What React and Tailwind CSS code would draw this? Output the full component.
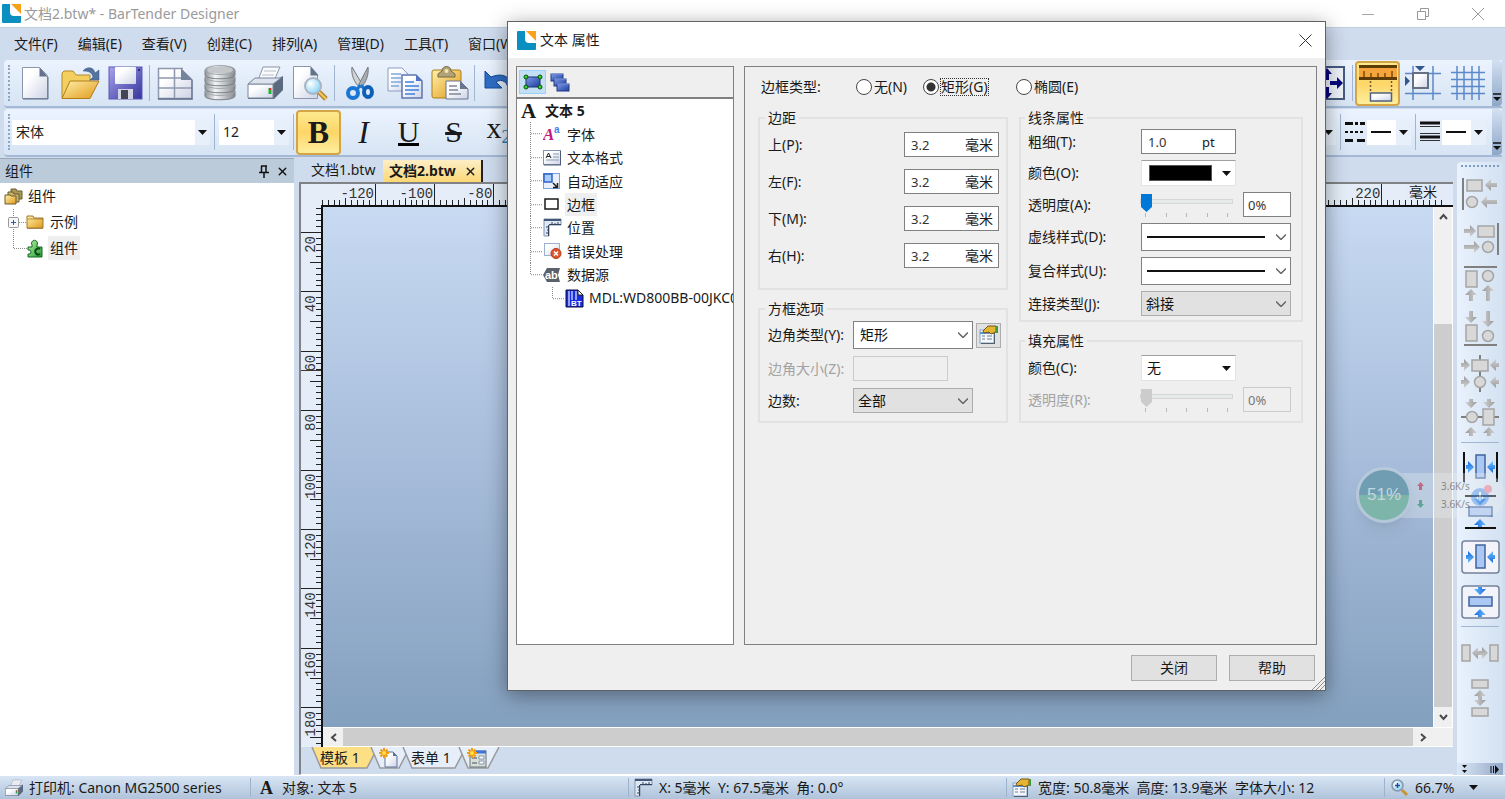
import clsx from "clsx"
import { X } from "lucide-react"

const MENUS = ["文件(F)", "编辑(E)", "查看(V)", "创建(C)", "排列(A)", "管理(D)", "工具(T)", "窗口(W)"]

const Defs = () => (
  <svg className="absolute h-0 w-0" aria-hidden="true">
    <defs>
      <linearGradient id="paper" x1="0" y1="0" x2="1" y2="1">
        <stop offset="0.3" stopColor="#ffffff" />
        <stop offset="1" stopColor="#cdd3e6" />
      </linearGradient>
      <linearGradient id="gold" x1="0" y1="0" x2="1" y2="1">
        <stop offset="0" stopColor="#fff0a8" />
        <stop offset="1" stopColor="#e09a1c" />
      </linearGradient>
      <linearGradient id="violet" x1="0" y1="0" x2="1" y2="1">
        <stop offset="0" stopColor="#a9a4ec" />
        <stop offset="1" stopColor="#34349c" />
      </linearGradient>
      <linearGradient id="metal" x1="0" y1="0" x2="1" y2="0">
        <stop offset="0" stopColor="#8e9297" />
        <stop offset="0.35" stopColor="#f4f5f6" />
        <stop offset="1" stopColor="#84898f" />
      </linearGradient>
      <linearGradient id="navy" x1="0" y1="0" x2="1" y2="1">
        <stop offset="0" stopColor="#7e9bea" />
        <stop offset="1" stopColor="#1b3d9b" />
      </linearGradient>
      <linearGradient id="greyArrow" x1="0" y1="0" x2="0" y2="1">
        <stop offset="0" stopColor="#d2d2d2" />
        <stop offset="1" stopColor="#9a9a9a" />
      </linearGradient>
      <linearGradient id="blueArrow" x1="0" y1="0" x2="0" y2="1">
        <stop offset="0" stopColor="#6fc0ff" />
        <stop offset="1" stopColor="#1468dc" />
      </linearGradient>
      <linearGradient id="puzzle" x1="0" y1="0" x2="1" y2="1">
        <stop offset="0" stopColor="#b5f2a4" />
        <stop offset="1" stopColor="#239b31" />
      </linearGradient>
      <radialGradient id="lens" cx="0.35" cy="0.35" r="0.7">
        <stop offset="0" stopColor="#ffffff" />
        <stop offset="1" stopColor="#86d3f5" />
      </radialGradient>
    </defs>
  </svg>
)

const Svg = ({ w = 36, h = w, box = `0 0 ${w} ${h}`, className, children }) => (
  <svg width={w} height={h} viewBox={box} fill="none" aria-hidden="true" className={clsx("shrink-0", className)}>
    {children}
  </svg>
)

/* ---------- icons ---------- */

const AppLogo = () => (
  <Svg w={19}>
    <rect width="19" height="19" rx="1" fill="#0b8fc0" />
    <path d="M8 0h11v12h-7a4 4 0 0 1-4-4z" fill="#fff" />
    <path d="M9 0h10v10z" fill="#f9a11b" />
  </Svg>
)

const NewIcon = () => (
  <Svg>
    <path d="M5.500 2.500h17l8 8v23h-25z" fill="url(#paper)" stroke="#8b95ab" />
    <path d="M22.500 2.500l8 9h-8z" fill="#62728c" />
    <path d="M6 34h25M31 12v22" stroke="#5d6c86" />
  </Svg>
)

const OpenIcon = () => (
  <Svg w={40} h={36}>
    <path d="M2 33V8l2-2h9l3 4h14v8" fill="#f3cf60" stroke="#b4882b" />
    <path d="M2 33.500L10 16h29l-9 17.500z" fill="url(#gold)" stroke="#b27c19" />
    <path d="M23 6c4-5 11-4 12 2l4-3v10h-9l3-3c-1-5-5-6-10-6z" fill="#54739e" stroke="#36547f" strokeWidth="0.500" />
  </Svg>
)

const SaveIcon = () => (
  <Svg>
    <rect x="2" y="2" width="33" height="32" fill="url(#violet)" stroke="#5a58b6" />
    <rect x="8" y="2" width="21" height="17" rx="1" fill="url(#paper)" />
    <path d="M11 34V24h15v10" fill="#d3d4e3" />
    <rect x="14" y="25" width="7" height="9" fill="#434557" />
    <rect x="31" y="4" width="2" height="2" fill="#29296e" />
  </Svg>
)

const TableIcon = () => (
  <Svg>
    <path d="M1 3h25l9 9v21H1z" fill="url(#paper)" />
    <path d="M1.500 3v30.500h34M1 3.500h25M1 13h28M1 23h34M17.500 3v30" stroke="#8f99ae" strokeWidth="1.500" />
    <path d="M24 3l12 12H24z" fill="#74849d" />
    <path d="M35 15v19H1" stroke="#61708a" strokeWidth="1.500" />
  </Svg>
)

const DatabaseIcon = () => (
  <Svg>
    {[24, 17, 10, 3].map((y) => (
      <g key={y}>
        <path d={`M3 ${y + 2}v5c0 5 30 5 30 0v-5z`} fill="url(#metal)" stroke="#7b8086" />
        <ellipse cx="18" cy={y + 2} rx="15" ry="4.500" fill="url(#metal)" stroke="#a2a7ac" />
      </g>
    ))}
    <ellipse cx="18" cy="5" rx="13" ry="3.500" fill="#c4c7ca" />
  </Svg>
)

const PrinterIcon = ({ size = 36 }) => (
  <Svg w={size} box="0 0 36 36">
    <path d="M16 2h17l-7 16H10z" fill="#f9fafc" stroke="#8b96a8" />
    <path d="M17 6h12M15 10h12M14 14h11" stroke="#b3bdcd" />
    <path d="M1 19l7-6h24l4-2v14l-9 9H1z" fill="#5c6a7f" />
    <path d="M1 19h25v14H1z" fill="url(#paper)" stroke="#7c889c" />
    <path d="M1 19l7-6h26l-8 6z" fill="#dce2ee" stroke="#7c889c" />
    <path d="M23 23v6" stroke="#1fb52c" strokeWidth="3" />
    <path d="M23 23v2" stroke="#d33" strokeWidth="2" />
  </Svg>
)

const PreviewIcon = () => (
  <Svg>
    <path d="M1.500 1.500h17l7 8v24h-24z" fill="url(#paper)" stroke="#8b95ab" />
    <path d="M18.500 1.500l8 9h-8z" fill="#62728c" />
    <path d="M27 27l7 7" stroke="#b5862a" strokeWidth="5" />
    <path d="M27 27l7 7" stroke="#efc96a" strokeWidth="2" />
    <circle cx="21" cy="21" r="8" fill="url(#lens)" stroke="#a8b4c2" strokeWidth="2" />
  </Svg>
)

const CutIcon = () => (
  <Svg>
    <path d="M10 2l10 17-2 4C12 17 9 10 10 2z" fill="#d0d2d5" stroke="#75797f" />
    <path d="M26 2l-9 17 2 4c5-6 8-13 7-21z" fill="#a9acb0" stroke="#75797f" />
    <path d="M18 20l-3 5M19 20l4 5" stroke="#1976d4" strokeWidth="3" />
    <ellipse cx="11" cy="28" rx="5" ry="5" stroke="#1976d4" strokeWidth="4" />
    <ellipse cx="26" cy="27" rx="4" ry="5" stroke="#0f5fb8" strokeWidth="4" />
  </Svg>
)

const CopyIcon = () => (
  <Svg>
    <path d="M1 3h14l6 6v17H1z" fill="url(#paper)" stroke="#8d9cc0" />
    <path d="M4 9h10M4 13h10M4 17h10M4 21h8" stroke="#7fa8dd" strokeWidth="1.500" />
    <path d="M15 10h14l6 6v17H15z" fill="url(#paper)" stroke="#5d74b0" strokeWidth="1.500" />
    <path d="M29 10v6h6z" fill="#4f74c4" />
    <path d="M18 17h9M18 21h14M18 25h14M18 29h10" stroke="#3f7fe0" strokeWidth="1.500" />
  </Svg>
)

const PasteIcon = () => (
  <Svg w={38} h={36}>
    <rect x="1" y="5" width="29" height="28" rx="2" fill="url(#gold)" stroke="#aa7c1b" />
    <path d="M7 12V9l4-3c0-6 9-6 9 0l4 3v3z" fill="#b1a376" stroke="#756a47" />
    <circle cx="15.500" cy="6" r="2" fill="#f5e6b5" />
    <path d="M15 16h14l8 8v10H15z" fill="url(#paper)" stroke="#69758b" />
    <path d="M29 16v8h8z" fill="#69758b" />
    <path d="M18 21h8M18 25h9M18 29h12" stroke="#7f8694" strokeWidth="1.500" />
  </Svg>
)

const UndoIcon = () => (
  <Svg>
    <path d="M3 6v17h17l-6-6c6-4 13 0 12 10 6-12-2-21-17-15z" fill="#2f6cc4" stroke="#174a98" />
  </Svg>
)

const FitIcon = () => (
  <Svg>
    <rect x="1" y="2" width="33" height="32" fill="#eef3fb" stroke="#465a82" strokeWidth="2" />
    <path d="M17 3l5 6h-3v6h-4V9h-3zM17 34l5-6h-3v-6h-4v6h-3zM33 18l-6-6v4h-7v4h7v4zM2 18l6-6v4h6v4H8v4z" fill="#08087e" />
  </Svg>
)

const RulerButtonIcon = () => (
  <Svg w={40} h={38}>
    <rect x="1" y="2" width="38" height="13" fill="#f6a53c" />
    <path d="M1 2.500h38M1 14.500h38" stroke="#5c3b06" strokeWidth="3" />
    <path d="M6 7v6M13 9v4M20 9v4M27 9v4M34 7v6" stroke="#7a4d08" strokeWidth="1.500" />
    <path d="M12.500 17v12M33.500 17v12" stroke="#6d5a2d" strokeDasharray="2 2" strokeWidth="1.500" />
    <rect x="12.500" y="29" width="21" height="8" fill="url(#paper)" stroke="#51617f" strokeWidth="1.500" />
  </Svg>
)

const SnapIcon = () => (
  <Svg>
    <path d="M8 1v34M28 1v34M0 8.500h36M0 28.500h36" stroke="#5b88c8" strokeWidth="1.500" />
    <rect x="8" y="8" width="15" height="15" fill="url(#paper)" stroke="#667084" strokeWidth="2" />
    <path d="M10 1h10l-5 5zM0 11v10l5-5z" fill="#34568f" />
  </Svg>
)

const GridIcon = () => (
  <Svg>
    <path d="M7 1v34M14 1v34M22 1v34M29 1v34M1 7.500h34M1 14.500h34M1 21.500h34M1 28.500h34" stroke="#5b88c8" strokeWidth="1.500" />
  </Svg>
)

const FoldersIcon = () => (
  <Svg w={19} h={18}>
    <path d="M7 2h5l1 2h5v8H7z" fill="#a8975b" stroke="#6b5d2e" />
    <path d="M4 5h5l1 2h5v8H4z" fill="#c9b36b" stroke="#6b5d2e" />
    <path d="M1 8h5l1 1h5v8H1z" fill="url(#gold)" stroke="#6b5d2e" />
  </Svg>
)

const FolderIcon = () => (
  <Svg w={18} h={16}>
    <path d="M1 14V2h6l1 2h9v10z" fill="url(#gold)" stroke="#a1772b" />
    <path d="M1 14.500h16M1.500 5H17" stroke="#8a641f" strokeOpacity="0.600" />
  </Svg>
)

const PuzzleIcon = () => (
  <Svg w={17} h={19}>
    <path d="M1 8h4V6a3 3 0 1 1 5 0v2h5v10H1v-3h1a2 2 0 0 0 0-4H1z" fill="url(#puzzle)" stroke="#146b23" />
    <path d="M13 10a3 3 0 1 0 0 5" stroke="#0c4b18" strokeWidth="2" />
  </Svg>
)

const HandIcon = () => (
  <Svg w={20}>
    <rect x="1" y="5" width="14" height="13" fill="#f4f8fc" stroke="#88a6c8" />
    <path d="M1 8h14" stroke="#5b93cf" strokeWidth="2" />
    <path d="M3 11h3M3 14h3M8 11h5M8 14h5" stroke="#9aa7b7" strokeWidth="1.500" />
    <path d="M4 6l5-5h8v6l-5 2-2-2-5 1z" fill="#e5b430" stroke="#75561a" />
    <path d="M17 1h2v7h-2z" fill="#3f9b3a" />
    <path d="M2 18.500h14M15.500 8v10" stroke="#53606f" />
  </Svg>
)

const SmallRulerIcon = () => (
  <Svg w={19}>
    <path d="M1 1h17v6H6v11H1z" fill="#dfe8f5" stroke="#8392ab" />
    <path d="M1 1h17v2H1z" fill="#435778" />
    <path d="M9 4v3M12 5v2M15 4v3M3 9h3M4 12h2M3 15h3M5.500 7v11M6 6.500h12" stroke="#32435f" />
  </Svg>
)

const ZoomInIcon = () => (
  <Svg w={19}>
    <path d="M12 12l5 5" stroke="#c99432" strokeWidth="3" />
    <circle cx="7.500" cy="7.500" r="5.500" fill="url(#lens)" stroke="#8b98aa" strokeWidth="1.500" />
    <path d="M5 7.500h5M7.500 5v5" stroke="#234c9e" strokeWidth="1.500" />
  </Svg>
)

const ShapeIcon = () => (
  <Svg w={20} h={16}>
    <rect x="3" y="3" width="14" height="10" fill="url(#navy)" stroke="#1d3270" />
    {[[3, 3], [17, 3], [3, 13], [17, 13]].map(([x, y]) => (
      <circle key={`${x}-${y}`} cx={x} cy={y} r="2" fill="#2fd62f" stroke="#124b12" />
    ))}
  </Svg>
)

const StackIcon = () => (
  <Svg w={20} h={19}>
    {[[1, 1], [4, 6], [7, 11]].map(([x, y]) => (
      <g key={x}>
        <rect x={x} y={y} width="12" height="7" fill="url(#navy)" stroke="#223b84" />
        <path d={`M${x} ${y}h12`} stroke="#8fa9ee" />
      </g>
    ))}
  </Svg>
)

const FontIcon = () => (
  <Svg w={18}>
    <text x="0" y="15" fontFamily="Liberation Serif, serif" fontWeight="bold" fontStyle="italic" fontSize="17" fill="#c2187f">A</text>
    <text x="11" y="8" fontFamily="Liberation Sans, sans-serif" fontWeight="bold" fontSize="10" fill="#4b7fe6">a</text>
  </Svg>
)

const FormatIcon = () => (
  <Svg w={18} h={16}>
    <rect x="0.500" y="0.500" width="17" height="14" fill="url(#paper)" stroke="#8494ae" />
    <path d="M1 15h17M17.500 1v14" stroke="#4c5c78" />
    <path d="M10 4h6M10 7h6M3 10h13" stroke="#8b9ab3" />
    <path d="M3 8l2.500-5L8 8M4 6.500h3" stroke="#222" />
  </Svg>
)

const AutoFitIcon = () => (
  <Svg w={17}>
    <rect x="0.500" y="0.500" width="16" height="15" fill="#e9f0fb" stroke="#7ba3e0" />
    <rect x="1" y="1" width="8" height="8" fill="#a9ccf8" stroke="#2c63cd" strokeWidth="1.500" />
    <path d="M10 10l4 4M14.500 10v4.500H10" stroke="#1c1c1c" strokeWidth="1.500" />
  </Svg>
)

const BorderIcon = () => (
  <Svg w={16} h={14}>
    <rect x="2" y="2" width="13" height="10" fill="#fff" stroke="#1a1a1a" strokeWidth="1.500" />
  </Svg>
)

const ErrorIcon = () => (
  <Svg w={19} h={18}>
    <rect x="1.500" y="1.500" width="15" height="12" fill="url(#paper)" stroke="#9fb0cf" />
    <circle cx="13" cy="11.500" r="5" fill="#e2542b" stroke="#b2391a" />
    <path d="M11 9.500l4 4M15 9.500l-4 4" stroke="#fff" strokeWidth="1.500" />
  </Svg>
)

const SourceIcon = () => (
  <Svg w={18} h={16}>
    <path d="M4 1h13l-2 7 2 7H4L0 8z" fill="#59616d" />
    <text x="2" y="12" fontFamily="Liberation Sans, sans-serif" fontWeight="bold" fontSize="11" fill="#fff">ab</text>
  </Svg>
)

const BarcodeIcon = () => (
  <Svg w={19}>
    <path d="M1 1h12l5 5v12H1z" fill="#1a2ce0" stroke="#0a0a3a" />
    <path d="M4 2v15M7 2v9M11 2v9" stroke="#b9c6ff" strokeWidth="1.500" />
    <path d="M13 1v5h5z" fill="#fff" stroke="#222" />
    <text x="6" y="17" fontFamily="Liberation Sans, sans-serif" fontWeight="bold" fontSize="8" fill="#fff">BT</text>
  </Svg>
)

const NewPageIcon = () => (
  <Svg w={20} h={20}>
    <path d="M6 4h8l4 4v11H6z" fill="url(#paper)" stroke="#5f7396" />
    <path d="M14 4v4h4z" fill="#5f7396" />
    <Spark />
  </Svg>
)

const NewFormIcon = () => (
  <Svg w={20} h={20}>
    <rect x="3" y="3" width="16" height="16" fill="#d9dfd7" stroke="#66747a" />
    <path d="M9 4h10" stroke="#3f74e0" strokeWidth="3" />
    <path d="M5 10h5M5 15h5" stroke="#738089" strokeWidth="1.500" />
    <path d="M12 8h5v3h-5zM12 13h5v3h-5z" fill="#fff" stroke="#8294b3" />
    <Spark />
  </Svg>
)

const Spark = () => (
  <g>
    <path d="M5 0v10M0 5h10M1.500 1.500l7 7M8.500 1.500l-7 7" stroke="#f39c12" strokeWidth="2" />
    <circle cx="5" cy="5" r="2" fill="#ffe14a" />
  </g>
)

/* ---------- alignment palette ---------- */

const ROTATION = { left: 0, up: 90, right: 180, down: 270 }

const Arrow = ({ x, y, len, dir, blue }) => (
  <path
    transform={`translate(${x} ${y}) rotate(${ROTATION[dir]})`}
    d={`M0 0l6-6v4h${len - 6}v4h-${len - 6}v4z`}
    fill={blue ? "url(#blueArrow)" : "url(#greyArrow)"}
  />
)

const Box = ({ x, y, w, h, blue }) => (
  <rect x={x} y={y} width={w} height={h} fill={blue ? "#abc8f5" : "#d8d8d8"} stroke={blue ? "#3f639c" : "#a5a5a5"} strokeWidth="1.500" />
)

const Dot = ({ x, y }) => <circle cx={x} cy={y} r="5.500" fill="#d8d8d8" stroke="#a5a5a5" strokeWidth="1.500" />

const Bar = ({ d, black }) => <path d={d} stroke={black ? "#111" : "#808080"} strokeWidth="2" />

const ALIGN_TOOLS = [
  <><Bar d="M3 4v32" /><Box x={7} y={6} w={15} h={11} /><Arrow x={25} y={11} len={12} dir="left" /><Dot x={12} y={28} /><Arrow x={21} y={28} len={16} dir="left" /></>,
  <><Bar d="M38 4v32" /><Box x={18} y={7} w={16} h={11} /><Arrow x={16} y={12} len={12} dir="right" /><Dot x={28} y={28} /><Arrow x={20} y={28} len={16} dir="right" /></>,
  <><Bar d="M4 3h33" /><Box x={6} y={7} w={11} h={16} /><Dot x={28} y={12} /><Arrow x={11} y={25} len={12} dir="up" /><Arrow x={28} y={21} len={16} dir="up" /></>,
  <><Bar d="M4 36h33" /><Box x={6} y={16} w={11} h={16} /><Dot x={28} y={27} /><Arrow x={11} y={14} len={12} dir="down" /><Arrow x={28} y={18} len={16} dir="down" /></>,
  <><Bar d="M20 1v37" /><Box x={12} y={6} w={16} h={11} /><Dot x={20} y={28} /><Arrow x={10} y={11} len={9} dir="right" /><Arrow x={30} y={11} len={9} dir="left" /><Arrow x={10} y={28} len={9} dir="right" /><Arrow x={30} y={28} len={9} dir="left" /></>,
  <><Bar d="M1 18h38" /><Dot x={12} y={18} /><Box x={23} y={10} w={11} h={16} /><Arrow x={11} y={9} len={9} dir="down" /><Arrow x={29} y={9} len={9} dir="down" /><Arrow x={11} y={28} len={9} dir="up" /><Arrow x={29} y={28} len={9} dir="up" /></>,
]

const wide = <><Box x={16} y={8} w={9} h={23} blue /><Arrow x={14} y={20} len={8} dir="right" blue /><Arrow x={27} y={20} len={8} dir="left" blue /></>
const tall = <><Box x={9} y={15} w={23} h={9} blue /><Arrow x={20} y={13} len={8} dir="down" blue /><Arrow x={20} y={27} len={8} dir="up" blue /></>
const frame = <rect x="2" y="4" width="37" height="32" rx="3" fill="#f2f4fa" stroke="#74819c" strokeWidth="1.500" />

const PAGE_TOOLS = [
  <><Bar d="M4 5v30M37 5v30" black />{wide}</>,
  <><Bar d="M5 4h31M5 36h31" black />{tall}</>,
  <>{frame}{wide}</>,
  <>{frame}{tall}</>,
]

const SPACE_TOOLS = [
  <><Box x={2} y={13} w={8} h={16} /><Box x={30} y={13} w={8} h={16} /><Arrow x={12} y={21} len={9} dir="left" /><Arrow x={28} y={21} len={9} dir="right" /></>,
  <><Box x={12} y={3} w={16} h={8} /><Box x={12} y={31} w={16} h={8} /><Arrow x={20} y={13} len={9} dir="up" /><Arrow x={20} y={29} len={9} dir="down" /></>,
]

const PaletteGroup = ({ tools }) =>
  tools.map((shape, i) => (
    <button key={i} className="flex h-[45px] shrink-0 items-center justify-center">
      <Svg w={40}>{shape}</Svg>
    </button>
  ))

const Palette = () => (
  <aside className="mt-1 flex w-[46px] shrink-0 flex-col rounded-t bg-linear-to-r from-[#e9f2fd] to-[#d3e1f1]">
    <div className="mx-1 mt-[3px] mb-1 border-t-2 border-dotted border-[#7d9cc4]" />
    <PaletteGroup tools={ALIGN_TOOLS} />
    <hr className="mx-1 my-px border-[#9fb7d3]" />
    <PaletteGroup tools={PAGE_TOOLS} />
    <hr className="mx-1 my-[2px] border-[#9fb7d3]" />
    <PaletteGroup tools={SPACE_TOOLS} />
    <div className="mt-auto flex h-3 items-center justify-between bg-linear-to-r from-[#dce8f6] to-[#93a9c8] px-1">
      <Svg w={7} h={9}><path d="M1 0h5L3.500 3zM1 5h5L3.500 8z" fill="#111" /></Svg>
      <Svg w={9} h={9}><path d="M1 1v7M3.500 1v7" stroke="#111" /><path d="M5 0l4 4.500L5 9z" fill="#111" /></Svg>
    </div>
  </aside>
)

/* ---------- bars ---------- */

const TitleBar = () => (
  <header className="flex h-[27px] shrink-0 items-center bg-white pl-[2px] text-[#9a9a9a]">
    <AppLogo />
    <h1 className="ml-[3px] text-sm">文档2.btw* - BarTender Designer</h1>
    <div className="ml-auto flex">
      <button aria-label="最小化" className="flex w-[55px] items-center justify-center"><Svg w={12}><path d="M0 6.500h12" stroke="#a5a5a5" /></Svg></button>
      <button aria-label="还原" className="flex w-[55px] items-center justify-center"><Svg w={12}><path d="M.5 3.500h8v8h-8zM3.500 3V.5h8v8H9" stroke="#999" /></Svg></button>
      <button aria-label="关闭" className="flex w-[55px] items-center justify-center"><Svg w={12}><path d="M0 0l12 12M12 0L0 12" stroke="#999" /></Svg></button>
    </div>
  </header>
)

const Grip = () => <div className="mx-[2px] h-9 border-l-2 border-dotted border-[#8aa6c8]" />
const Sep = () => <div className="mx-[2px] h-9 w-px shrink-0 bg-[#9fb5d0]" />

const ToolButton = ({ label, active, children }) => (
  <button
    aria-label={label}
    className={clsx(
      "flex h-[45px] w-[45px] shrink-0 items-center justify-center",
      active && "rounded-sm border-2 border-[#d3a546] bg-linear-to-b from-[#fde98d] via-[#fdd667] to-[#fdee9c]"
    )}
  >
    {children}
  </button>
)

const Overflow = () => (
  <button aria-label="更多" className="ml-[2px] flex h-full w-[10px] shrink-0 flex-col items-center justify-end rounded-r bg-linear-to-b from-[#d3e0f1] to-[#8ea7c8] pb-1">
    <Svg w={8} h={9}><path d="M0 1h8" stroke="#111" strokeWidth="1.500" /><path d="M0 4h8L4 8z" fill="#111" /></Svg>
  </button>
)

const Caret = () => (
  <Svg w={9} h={5}><path d="M0 0h9L4.500 5z" fill="#111" /></Svg>
)

const Toolbar = ({ children }) => (
  <div className="mr-[3px] mb-px ml-1 flex h-12 shrink-0 items-center rounded-l border-b-2 border-[#a3b9d5] bg-linear-to-b from-[#ebf3fe] to-[#d7e4f3] pl-[2px]">
    {children}
  </div>
)

const BarSelect = ({ label, value, className }) => (
  <div className={clsx("relative h-[25px] shrink-0", className)}>
    <select aria-label={label} className="h-full w-full appearance-none bg-white pl-1 text-sm text-[#222]">
      <option>{value}</option>
    </select>
    <div className="pointer-events-none absolute inset-y-0 right-0 flex w-[15px] items-center justify-center bg-[#e6effa]"><Caret /></div>
  </div>
)

const LineSelect = ({ label }) => (
  <div className="relative h-[25px] w-[44px]">
    <select aria-label={label} className="h-full w-full appearance-none bg-white"><option value="solid" /></select>
    <div className="pointer-events-none absolute inset-y-0 left-1 flex items-center"><div className="h-[2px] w-5 bg-[#111]" /></div>
    <div className="pointer-events-none absolute inset-y-0 right-0 flex w-[15px] items-center justify-center bg-[#e6effa]"><Caret /></div>
  </div>
)

const MainToolbar = () => (
  <Toolbar>
    <Grip />
    <ToolButton label="新建"><NewIcon /></ToolButton>
    <ToolButton label="打开"><OpenIcon /></ToolButton>
    <ToolButton label="保存"><SaveIcon /></ToolButton>
    <Sep />
    <ToolButton label="页面设置"><TableIcon /></ToolButton>
    <ToolButton label="数据库"><DatabaseIcon /></ToolButton>
    <ToolButton label="打印"><PrinterIcon /></ToolButton>
    <ToolButton label="打印预览"><PreviewIcon /></ToolButton>
    <Sep />
    <ToolButton label="剪切"><CutIcon /></ToolButton>
    <ToolButton label="复制"><CopyIcon /></ToolButton>
    <ToolButton label="粘贴"><PasteIcon /></ToolButton>
    <Sep />
    <ToolButton label="撤消"><UndoIcon /></ToolButton>
    <div className="ml-auto flex h-full items-center">
      <ToolButton label="适合窗口"><FitIcon /></ToolButton>
      <Sep />
      <ToolButton label="标尺" active><RulerButtonIcon /></ToolButton>
      <ToolButton label="对齐"><SnapIcon /></ToolButton>
      <ToolButton label="网格"><GridIcon /></ToolButton>
      <Overflow />
    </div>
  </Toolbar>
)

const FontToolbar = () => (
  <Toolbar>
    <Grip />
    <BarSelect label="字体" value="宋体" className="mr-[2px] w-[198px]" />
    <Sep />
    <BarSelect label="字号" value="12" className="mr-[2px] ml-[2px] w-[70px]" />
    <Sep />
    <ToolButton label="粗体" active><span className="font-['Liberation_Serif'] text-[32px] font-bold">B</span></ToolButton>
    <ToolButton label="斜体"><span className="font-['Liberation_Serif'] text-[32px] italic">I</span></ToolButton>
    <ToolButton label="下划线"><span className="h-7 border-b-[3px] border-black font-['Liberation_Serif'] text-[30px] leading-7">U</span></ToolButton>
    <ToolButton label="删除线"><span className="font-['Liberation_Serif'] text-[30px] line-through">S</span></ToolButton>
    <ToolButton label="下标"><span className="font-['Liberation_Serif'] text-[30px]">x<sub className="text-lg text-[#2a7db5]">2</sub></span></ToolButton>
    <div className="ml-auto flex h-full items-center">
      <BarSelect label="颜色" value="" className="mr-[2px] w-[44px]" />
      <Sep />
      <Svg w={20} h={22} className="mx-[2px]">
        <path d="M0 2.500h20" stroke="#111" strokeWidth="3" strokeDasharray="8 2 3 2" />
        <path d="M0 11h20" stroke="#111" strokeWidth="2" strokeDasharray="3 2" />
        <path d="M0 19.500h20" stroke="#111" strokeWidth="3" strokeDasharray="8 4" />
      </Svg>
      <LineSelect label="虚线样式" />
      <div className="w-[2px]" />
      <Sep />
      <Svg w={20} h={22} className="mx-[2px]">
        <path d="M0 2h20M0 16h20" stroke="#111" strokeWidth="3" />
        <path d="M0 5.500h20M0 12.500h20M0 19.500h20" stroke="#333" />
      </Svg>
      <LineSelect label="复合样式" />
      <div className="w-1" />
      <Overflow />
    </div>
  </Toolbar>
)

/* ---------- components panel ---------- */

const ComponentsPanel = () => (
  <aside className="flex w-[294px] shrink-0 flex-col bg-white">
    <div className="flex h-[25px] items-center border-t border-[#9aa9b9] bg-[#bccbda] px-[5px]">
      <h2>组件</h2>
      <Svg w={12} h={13} className="mr-[6px] ml-auto"><path d="M3 1h6M3.500 1v6M8 1v6M1 7.500h10M6 8v5" stroke="#111" strokeWidth="1.500" /></Svg>
      <button aria-label="关闭面板"><X size={13} strokeWidth={2.5} color="#111" /></button>
    </div>
    <ul>
      <li className="flex h-[26px] items-center gap-[5px] pl-1"><FoldersIcon />组件</li>
      <li className="flex h-[26px] items-center pl-2">
        <Svg w={18} h={26}>
          <path d="M5.500 0v26M11 13.500h7" stroke="#8a8a8a" strokeDasharray="1 1" />
          <rect x="0.500" y="8.500" width="10" height="10" rx="1" fill="#f5f6f8" stroke="#9a9a9a" />
          <path d="M3 13.500h5M5.500 11v5" stroke="#3a57a5" />
        </Svg>
        <FolderIcon />
        <span className="ml-1 px-[2px]">示例</span>
      </li>
      <li className="flex h-[26px] items-center pl-2">
        <Svg w={19} h={26}><path d="M5.500 0v13M6 13.500h13" stroke="#8a8a8a" strokeDasharray="1 1" /></Svg>
        <PuzzleIcon />
        <span className="ml-1 bg-[#efefef] px-[2px] leading-6">组件</span>
      </li>
    </ul>
  </aside>
)

/* ---------- document ---------- */

const STEP = 59.2

const tickLength = (i) => (i % 10 === 0 ? 21 : i % 5 === 0 ? 11 : 5)

const TopRuler = () => {
  const first = 54
  const ticks = Array.from({ length: 190 }, (_, i) => i - 9)
  return (
    <div className="relative min-w-0 flex-1 border-b-2 border-[#111]">
      <svg className="block h-[21px] w-full" aria-hidden="true">
        {ticks.map((i) => (
          <line key={i} x1={Math.round(first + (i * STEP) / 10) + 0.5} x2={Math.round(first + (i * STEP) / 10) + 0.5} y1={21 - tickLength(i)} y2="21" stroke="#222" />
        ))}
        {Array.from({ length: 18 }, (_, k) => (
          <g key={k}>
            <rect x={first + k * STEP - 32} y="2" width="31" height="12" fill="#e2ebf7" />
            <text x={first + k * STEP - 1} y="14" textAnchor="end" fontFamily="Liberation Mono, monospace" fontSize="14" fill="#333">
              {k * 20 - 120}
            </text>
          </g>
        ))}
      </svg>
      <span className="absolute top-0 right-0 bg-[#e2ebf7] pr-4 pl-1 text-sm leading-4">毫米</span>
    </div>
  )
}

const SideRuler = () => {
  const first = 25
  const ticks = Array.from({ length: 100 }, (_, i) => i - 4)
  return (
    <svg className="box-content h-full w-5 shrink-0 border-r-2 border-[#111]" aria-hidden="true">
      {ticks.map((i) => (
        <line key={i} y1={Math.round(first + (i * 59.4) / 10) + 0.5} y2={Math.round(first + (i * 59.4) / 10) + 0.5} x1={20 - tickLength(i)} x2="20" stroke="#222" />
      ))}
      {Array.from({ length: 9 }, (_, k) => (
        <g key={k} transform={`translate(14 ${first + 4 + k * 59.4}) rotate(-90)`}>
          <rect x={k < 4 ? -17 : -25} y="-12" width={k < 4 ? 17 : 25} height="13" fill="#e2ebf7" />
          <text textAnchor="end" fontFamily="Liberation Mono, monospace" fontSize="14" fill="#333">{20 + k * 20}</text>
        </g>
      ))}
      <path d="M0 163.500h20" stroke="#4a3533" />
    </svg>
  )
}

const ScrollArrow = ({ dir }) => (
  <Svg w={9} h={9} className={clsx(dir === "up" && "rotate-90", dir === "right" && "rotate-180", dir === "down" && "-rotate-90")}>
    <path d="M7 1L3 4.500 7 8" stroke="#4a4a4a" strokeWidth="2" />
  </Svg>
)

const SheetTab = ({ width, active, children }) => (
  <button className="relative -mr-[10px] flex h-[22px] shrink-0 items-center pl-[9px]" style={{ width }}>
    <svg className="absolute inset-0 h-full w-full" aria-hidden="true">
      <path d={`M1 0L10 21H${width - 13}L${width - 2} 0`} fill={active ? "#fddf86" : "#e6eef9"} stroke="#9a9a9a" strokeWidth="1.500" />
    </svg>
    <span className="relative">{children}</span>
  </button>
)

const Workspace = () => (
  <main className="mr-1 ml-[5px] flex min-w-0 flex-1 flex-col">
    <div className="flex h-6 shrink-0 items-end pl-3">
      <button className="w-[72px] text-left leading-6">文档1.btw</button>
      <button className="flex h-[22px] w-[100px] items-center justify-between border-r-2 border-[#222] bg-linear-to-b from-[#fdeec6] to-[#fbd873] pr-1 pl-[6px] font-bold">
        文档2.btw
        <X size={13} strokeWidth={2.5} />
      </button>
    </div>
    <div className="flex min-h-0 flex-1 flex-col border-t-2 border-l-2 border-[#808285] bg-[#e4edf8]">
      <div className="flex shrink-0 pl-5">
        <TopRuler />
      </div>
      <div className="flex min-h-0 flex-1">
        <SideRuler />
        <div className="flex min-w-0 flex-1 flex-col">
          <div className="flex min-h-0 flex-1">
            <div className="flex-1 bg-linear-to-b from-[#c8daf2] via-[#a6bcda] to-[#84a0bf]" />
            <div className="flex w-5 flex-col items-center border-x border-white bg-[#f0f0f0]">
              <div className="flex h-[19px] items-center"><ScrollArrow dir="up" /></div>
              <div className="h-[98px]" />
              <div className="w-full flex-1 bg-[#cdcdcd]" />
              <div className="flex h-5 items-center"><ScrollArrow dir="down" /></div>
            </div>
          </div>
          <div className="flex h-5 items-center border-y border-white bg-[#f0f0f0] pr-5">
            <div className="flex w-5 justify-center"><ScrollArrow dir="left" /></div>
            <div className="h-full flex-1 bg-[#cdcdcd]" />
            <div className="flex w-5 justify-center"><ScrollArrow dir="right" /></div>
          </div>
        </div>
      </div>
    </div>
    <div className="flex h-[28px] shrink-0 border-b border-l-2 border-b-white border-l-[#808285] bg-[#cfdcee] pl-[10px]">
      <SheetTab width={69} active>模板 1</SheetTab>
      <SheetTab width={42}><NewPageIcon /></SheetTab>
      <SheetTab width={66}>表单 1</SheetTab>
      <SheetTab width={43}><NewFormIcon /></SheetTab>
    </div>
  </main>
)

const StatusCell = ({ icon, text, className }) => (
  <div className={clsx("my-[2px] flex items-center gap-[6px] border-l border-[#9db2cb] pl-[5px] first:border-l-0", className)}>
    {icon}
    <span className="whitespace-pre">{text}</span>
  </div>
)

const StatusBar = () => (
  <footer className="flex h-6 shrink-0 border-t border-white bg-linear-to-b from-[#d8e5f4] to-[#afc3da]">
    <StatusCell className="w-[250px]" icon={<PrinterIcon size={18} />} text="打印机: Canon MG2500 series" />
    <StatusCell
      className="w-[378px]"
      icon={<span className="w-5 pl-1 font-['Liberation_Serif'] text-lg leading-5 font-bold">A</span>}
      text="对象: 文本 5"
    />
    <StatusCell className="flex-1" icon={<SmallRulerIcon />} text="X: 5毫米  Y: 67.5毫米  角: 0.0°" />
    <StatusCell className="w-[378px]" icon={<HandIcon />} text="宽度: 50.8毫米  高度: 13.9毫米  字体大小: 12" />
    <div className="my-[2px] flex w-[121px] items-center gap-[6px] border-l border-[#9db2cb] pl-[5px]">
      <ZoomInIcon />
      <span>66.7%</span>
      <button aria-label="缩放" className="ml-[9px]"><Caret /></button>
    </div>
  </footer>
)

/* ---------- dialog ---------- */

const TREE = [
  { icon: <FontIcon />, name: "字体" },
  { icon: <FormatIcon />, name: "文本格式" },
  { icon: <AutoFitIcon />, name: "自动适应" },
  { icon: <BorderIcon />, name: "边框", selected: true },
  { icon: <SmallRulerIcon />, name: "位置" },
  { icon: <ErrorIcon />, name: "错误处理" },
  { icon: <SourceIcon />, name: "数据源", last: true },
]

const Branch = ({ last }) => (
  <svg className="h-full w-[13px] shrink-0" aria-hidden="true">
    <line x1="0.5" y1="0" x2="0.5" y2={last ? "50%" : "100%"} stroke="#8a8a8a" strokeDasharray="1 1" />
    <line x1="1" y1="50%" x2="13" y2="50%" stroke="#8a8a8a" strokeDasharray="1 1" />
  </svg>
)

const PropertyTree = () => (
  <div className="flex w-[218px] shrink-0 flex-col border border-[#808080]">
    <div className="flex h-8 shrink-0 items-center gap-1 border-b-2 border-[#808080] pl-[2px]">
      <button aria-label="对象" className="flex h-6 w-[27px] items-center justify-center border border-[#99d1ff] bg-[#c3dff5]"><ShapeIcon /></button>
      <button aria-label="图层"><StackIcon /></button>
    </div>
    <div className="flex-1 overflow-hidden bg-white">
      <ul className="grid h-[211px] grid-rows-9">
        <li className="flex items-center pl-1 font-bold">
          <span className="w-6 font-['Liberation_Serif'] text-[21px] leading-5">A</span>
          文本 5
        </li>
        {TREE.map(({ icon, name, selected, last }) => (
          <li key={name} className="flex items-center pl-[13px]">
            <Branch last={last} />
            <span className="flex w-[22px] shrink-0">{icon}</span>
            <span className={clsx("px-[2px] leading-[23px]", selected && "bg-[#efefef]")}>{name}</span>
          </li>
        ))}
        <li className="flex items-center pl-[35px]">
          <Branch last />
          <BarcodeIcon />
          <span className="ml-[5px] whitespace-nowrap">MDL:WD800BB-00JKC0</span>
        </li>
      </ul>
    </div>
  </div>
)

const Radio = ({ label, checked, className }) => (
  <label className={clsx("flex items-center gap-[2px]", className)}>
    <input
      type="radio"
      name="border-type"
      defaultChecked={checked}
      className="h-4 w-4 appearance-none rounded-full border border-[#444] bg-white checked:bg-radial checked:from-[#333] checked:from-40% checked:to-white checked:to-50%"
    />
    <span className={clsx("leading-4", checked && "outline-1 outline-[#333] outline-dotted")}>{label}</span>
  </label>
)

const Group = ({ title, className, children }) => (
  <fieldset className={clsx("min-w-0 border-2 border-[#e2e2e2]", className)}>
    <legend className="-ml-[3px] px-[3px] leading-4">{title}</legend>
    {children}
  </fieldset>
)

const Field = ({ id, label, disabled, labelWidth = "w-[85px]", children }) => (
  <div className="flex items-center">
    <label htmlFor={id} className={clsx("shrink-0 whitespace-nowrap", labelWidth, disabled && "text-[#a3a3a3]")}>{label}</label>
    {children}
  </div>
)

const UnitInput = ({ id, value, unit, unitClass }) => (
  <div className="flex h-[25px] w-[95px] items-center border border-[#808080] bg-white pl-[6px]">
    <input id={id} defaultValue={value} className="w-[54px] bg-transparent text-[13px] text-[#333] outline-none" />
    <span className={unitClass}>{unit}</span>
  </div>
)

const Chevron = () => (
  <Svg w={10} h={6}><path d="M0 0.500l5 5 5-5" stroke="#666" strokeWidth="1.500" /></Svg>
)

const Select = ({ id, value, grey, line, className }) => (
  <div className={clsx("relative", grey ? "h-[25px]" : "h-7", className)}>
    <select
      id={id}
      className={clsx("h-full w-full appearance-none border text-[#111]", grey ? "border-[#adadad] bg-[#e1e1e1] pl-1" : "border-[#808080] bg-white pl-[6px]")}
    >
      <option value={value ?? "solid"}>{value}</option>
    </select>
    {line && <div className="pointer-events-none absolute inset-y-0 right-[26px] left-[6px] flex items-center"><div className="h-[2px] w-full bg-[#111]" /></div>}
    <div className="pointer-events-none absolute inset-y-0 right-[5px] flex items-center"><Chevron /></div>
  </div>
)

const ColorSelect = ({ id, value, swatch }) => (
  <div className="relative h-[26px] w-[95px]">
    <select id={id} className="h-full w-full appearance-none border border-x-[#e3e3e3] border-t-[#a0a0a0] border-b-[#e3e3e3] bg-white pl-[5px] text-[#111]">
      <option value={value ?? "black"}>{value}</option>
    </select>
    {swatch && <div className="pointer-events-none absolute inset-y-[5px] left-2 w-[63px] border border-[#555] bg-black" />}
    <div className="pointer-events-none absolute inset-y-0 right-[5px] flex items-center"><Caret /></div>
  </div>
)

const Opacity = ({ id, disabled }) => (
  <div className="flex flex-1 items-center justify-between">
    <div className="w-[93px]">
      <input
        id={id}
        type="range"
        defaultValue="0"
        disabled={disabled}
        className="block h-[19px] w-full appearance-none bg-transparent [&::-webkit-slider-runnable-track]:h-[5px] [&::-webkit-slider-runnable-track]:border [&::-webkit-slider-runnable-track]:border-[#d6d6d6] [&::-webkit-slider-runnable-track]:bg-[#e7eaea] [&::-webkit-slider-thumb]:-mt-[6px] [&::-webkit-slider-thumb]:h-[18px] [&::-webkit-slider-thumb]:w-[11px] [&::-webkit-slider-thumb]:appearance-none [&::-webkit-slider-thumb]:bg-[#0078d7] [&::-webkit-slider-thumb]:[clip-path:polygon(0_0,100%_0,100%_72%,50%_100%,0_72%)] disabled:[&::-webkit-slider-thumb]:bg-[#cccccc]"
      />
      <div className="mt-[2px] flex justify-between px-[5px]">
        {[0, 1, 2, 3, 4].map((n) => (
          <span key={n} className="h-1 w-px bg-[#b8b8b8]" />
        ))}
      </div>
    </div>
    <input
      aria-label="透明度"
      defaultValue="0%"
      disabled={disabled}
      className={clsx("h-[25px] w-[48px] border pl-1 text-[13px]", disabled ? "border-[#cccccc] text-[#777]" : "border-[#808080] bg-white text-[#333]")}
    />
  </div>
)

const BorderPage = () => (
  <div className="ml-[10px] flex-1 border border-[#808080] px-[13px]">
    <div className="flex h-[43px] items-center pb-[3px] pl-[3px]">
      <span className="w-[95px]">边框类型:</span>
      <Radio label="无(N)" className="w-[67px]" />
      <Radio label="矩形(G)" checked className="w-[93px]" />
      <Radio label="椭圆(E)" />
    </div>
    <div className="flex gap-[11px]">
      <div className="flex w-[250px] shrink-0 flex-col gap-[11px]">
        <Group title="边距" className="pt-[6px] pr-[7px] pb-5 pl-2">
          <div className="flex flex-col gap-3">
            {[["上(P):", "top"], ["左(F):", "left"], ["下(M):", "bottom"], ["右(H):", "right"]].map(([label, id]) => (
              <Field key={id} id={id} label={label} labelWidth="w-[136px]">
                <UnitInput id={id} value="3.2" unit="毫米" />
              </Field>
            ))}
          </div>
        </Group>
        <Group title="方框选项" className="pt-1 pr-[5px] pb-2 pl-2">
          <div className="flex flex-col gap-[7px]">
            <Field id="corner" label="边角类型(Y):">
              <Select id="corner" value="矩形" className="w-[120px]" />
              <button aria-label="边角属性" className="ml-[3px] flex h-[25px] w-[25px] items-center justify-center border border-[#adadad] bg-[#e1e1e1]"><HandIcon /></button>
            </Field>
            <Field id="corner-size" label="边角大小(Z):" disabled>
              <input id="corner-size" disabled className="h-[25px] w-[95px] border border-[#cccccc]" />
            </Field>
            <Field id="sides" label="边数:">
              <Select id="sides" value="全部" grey className="w-[120px]" />
            </Field>
          </div>
        </Group>
      </div>
      <div className="flex min-w-0 flex-1 flex-col gap-[11px]">
        <Group title="线条属性" className="pt-[3px] pr-[10px] pb-1 pl-[7px]">
          <div className="flex flex-col gap-[6px]">
            <Field id="weight" label="粗细(T):" labelWidth="w-[113px]">
              <UnitInput id="weight" value="1.0" unit="pt" unitClass="text-[13px]" />
            </Field>
            <Field id="line-color" label="颜色(O):" labelWidth="w-[113px]"><ColorSelect id="line-color" swatch /></Field>
            <Field id="line-opacity" label="透明度(A):" labelWidth="w-[112px]"><Opacity id="line-opacity" /></Field>
            <Field id="dash" label="虚线样式(D):" labelWidth="w-[113px]"><Select id="dash" line className="flex-1" /></Field>
            <Field id="compound" label="复合样式(U):" labelWidth="w-[113px]"><Select id="compound" line className="flex-1" /></Field>
            <Field id="join" label="连接类型(J):" labelWidth="w-[113px]"><Select id="join" value="斜接" grey className="flex-1" /></Field>
          </div>
        </Group>
        <Group title="填充属性" className="pt-[6px] pr-[10px] pb-[9px] pl-[7px]">
          <div className="flex flex-col gap-[6px]">
            <Field id="fill-color" label="颜色(C):" labelWidth="w-[113px]"><ColorSelect id="fill-color" value="无" /></Field>
            <Field id="fill-opacity" label="透明度(R):" disabled labelWidth="w-[112px]"><Opacity id="fill-opacity" disabled /></Field>
          </div>
        </Group>
      </div>
    </div>
  </div>
)

const PropertiesDialog = () => (
  <section role="dialog" aria-label="文本 属性" className="absolute top-[21px] left-[507px] flex h-[670px] w-[819px] flex-col border border-[#5f6368] bg-[#efefef] shadow-[0_4px_20px_rgba(0,0,0,0.4)]">
    <div className="flex h-9 shrink-0 items-center bg-white pr-[13px] pl-[9px]">
      <AppLogo />
      <h2 className="ml-1">文本 属性</h2>
      <button aria-label="关闭" className="ml-auto"><Svg w={13}><path d="M0.500 0.500l12 12M12.500 0.500l-12 12" stroke="#333" /></Svg></button>
    </div>
    <div className="mx-2 mt-2 flex min-h-0 flex-1">
      <PropertyTree />
      <BorderPage />
    </div>
    <div className="flex h-[45px] shrink-0 justify-end gap-3 pt-[10px] pr-[10px]">
      <button className="h-[26px] w-[86px] border border-[#adadad] bg-[#e1e1e1]">关闭</button>
      <button className="h-[26px] w-[86px] border border-[#adadad] bg-[#e1e1e1]">帮助</button>
    </div>
    <Svg w={13} className="absolute right-0 bottom-0"><path d="M0 13L13 0M4 13l9-9M8 13l5-5" stroke="#8c8c8c" /></Svg>
  </section>
)

const SpeedWidget = () => (
  <div className="absolute top-[467px] right-0 flex items-center opacity-60">
    <div className="z-10 flex h-[56px] w-[56px] items-center justify-center rounded-full border-3 border-[#c3d3dd] bg-linear-to-b from-[#4e8a98] from-50% to-[#66b48f] to-50% font-['Liberation_Sans'] text-[17px] text-[#dbeae6] shadow-lg">51%</div>
    <div className="-ml-4 flex h-[45px] w-[109px] items-center rounded-r-full bg-[#e9ecf0]/60 pl-5 text-[10px] text-[#555]">
      <Svg w={9} h={26} className="mr-4">
        <path d="M4.500 0L8 4H6v4H3V4H1z" fill="#d0384a" />
        <path d="M4.500 26L8 22H6v-4H3v4H1z" fill="#2f9a6c" />
      </Svg>
      <div className="flex flex-col leading-[18px]"><span>3.6K/s</span><span>3.6K/s</span></div>
      <Svg w={24} h={22}>
        <circle cx="10" cy="13" r="9" fill="#6fa5e8" />
        <path d="M10 8v8M7 13l3 3 3-3" stroke="#fff" strokeWidth="2" />
        <circle cx="18" cy="5" r="4" fill="#ef8a97" />
      </Svg>
    </div>
  </div>
)

export default function App() {
  return (
    <div className="relative flex h-screen flex-col overflow-hidden bg-[#cfdcee] font-['Noto_Sans','Noto_Sans_CJK_SC',sans-serif] text-sm leading-5 text-[#1a1a1a]">
      <Defs />
      <TitleBar />
      <nav className="flex h-[33px] shrink-0 items-center gap-5 border-t border-[#c3cfdf] pl-[14px]">
        {MENUS.map((name) => (
          <button key={name} className="shrink-0">{name}</button>
        ))}
      </nav>
      <MainToolbar />
      <FontToolbar />
      <div className="flex min-h-0 flex-1">
        <ComponentsPanel />
        <Workspace />
        <Palette />
        <div className="w-[2px]" />
      </div>
      <StatusBar />
      <PropertiesDialog />
      <SpeedWidget />
    </div>
  )
}
